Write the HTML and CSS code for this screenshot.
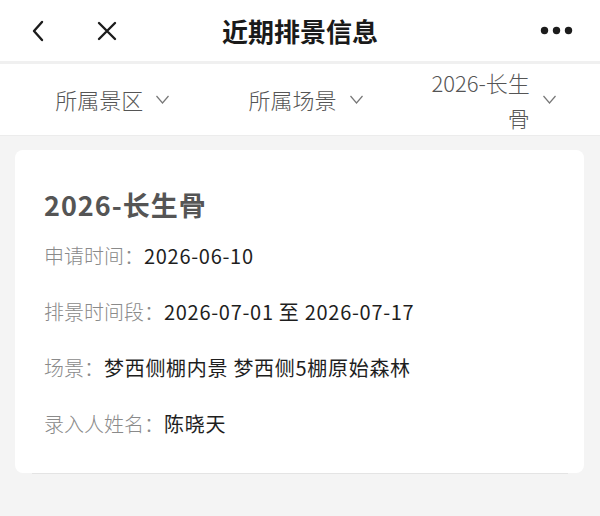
FILE: index.html
```html
<!DOCTYPE html>
<html lang="zh-CN">
<head>
    <meta charset="UTF-8">
    <meta name="viewport" content="width=device-width, initial-scale=1.0">
    <title>近期排景信息</title>
    <link rel="stylesheet" href="styles.css">
</head>
<body>
    <div class="topbar">
        <div class="topbar-left">
            <svg class="icon-back" width="14" height="22" viewBox="0 0 14 22">
                <path d="M11 2 L3 11 L11 20" fill="none" stroke="#1c1c1c" stroke-width="2.4" stroke-linecap="round" stroke-linejoin="round"/>
            </svg>
            <svg class="icon-close" width="20" height="20" viewBox="0 0 20 20">
                <path d="M2 2 L18 18 M18 2 L2 18" fill="none" stroke="#1c1c1c" stroke-width="2.4" stroke-linecap="round"/>
            </svg>
        </div>
        <div class="topbar-title">近期排景信息</div>
        <div class="topbar-right">
            <svg class="icon-more" width="33" height="9" viewBox="0 0 33 9">
                <circle cx="4.5" cy="4.5" r="3.7" fill="#1c1c1c"/>
                <circle cx="16.5" cy="4.5" r="3.7" fill="#1c1c1c"/>
                <circle cx="28.5" cy="4.5" r="3.7" fill="#1c1c1c"/>
            </svg>
        </div>
    </div>

    <div class="filters">
        <div class="filter">
            <span class="filter-text">所属景区</span>
            <svg class="chev" width="15" height="9" viewBox="0 0 15 9"><path d="M1.5 1 L7.5 8 L13.5 1" fill="none" stroke="#777" stroke-width="1.2"/></svg>
        </div>
        <div class="filter filter-mid">
            <span class="filter-text">所属场景</span>
            <svg class="chev" width="15" height="9" viewBox="0 0 15 9"><path d="M1.5 1 L7.5 8 L13.5 1" fill="none" stroke="#777" stroke-width="1.2"/></svg>
        </div>
        <div class="filter">
            <span class="filter-text filter-wrap">2026-长生骨</span>
            <svg class="chev" width="15" height="9" viewBox="0 0 15 9"><path d="M1.5 1 L7.5 8 L13.5 1" fill="none" stroke="#777" stroke-width="1.2"/></svg>
        </div>
    </div>

    <div class="card">
        <h2 class="card-title">2026-长生骨</h2>
        <div class="row"><span class="label">申请时间：</span><span class="value">2026-06-10</span></div>
        <div class="row"><span class="label">排景时间段：</span><span class="value">2026-07-01 至 2026-07-17</span></div>
        <div class="row"><span class="label">场景：</span><span class="value">梦西侧棚内景 梦西侧5棚原始森林</span></div>
        <div class="row"><span class="label">录入人姓名：</span><span class="value">陈晓天</span></div>
    </div>
    <div class="card-line"></div>
</body>
</html>
```

FILE: styles.css
```css
body {
    margin: 0;
    padding: 0;
    width: 600px;
    height: 516px;
    overflow: hidden;
    background-color: #f4f4f4;
    font-family: "Noto Sans CJK SC", "Noto Sans", sans-serif;
}

.topbar {
    display: grid;
    grid-template-columns: 1fr auto 1fr;
    align-items: center;
    height: 61px;
    background-color: #fff;
    border-bottom: 3px solid #f0f0f0;
}
.topbar-left {
    display: flex;
    align-items: center;
    gap: 52px;
    padding-left: 31px;
}
.topbar-title {
    font-size: 26px;
    font-weight: bold;
    color: #1a1a1a;
}
.topbar-right {
    display: flex;
    justify-content: flex-end;
    padding-right: 27px;
}
.icon-back {
    margin-top: 1px;
}

.filters {
    display: grid;
    grid-template-columns: 1fr 1fr 1fr;
    height: 71px;
    padding: 0 14px 0 18px;
    background-color: #fff;
    border-bottom: 1px solid #ececec;
}
.filter {
    display: flex;
    justify-content: center;
    align-items: center;
    gap: 12px;
}
.filter-mid {
    padding-left: 8px;
}
.filter-text {
    font-size: 22px;
    font-weight: 300;
    line-height: 35px;
    color: #555;
}
.filter-wrap {
    max-width: 104px;
    text-align: right;
}
.chev {
    flex-shrink: 0;
}

.card {
    margin: 14px 16px 0 15px;
    height: 323px;
    box-sizing: border-box;
    padding: 36px 29px 0 29px;
    background-color: #fff;
    border-radius: 8px;
    display: flex;
    flex-direction: column;
    gap: 28px;
}
.card-title {
    margin: 0 0 -9px 0;
    font-size: 27px;
    line-height: 37px;
    font-weight: bold;
    letter-spacing: 1px;
    color: #555;
}
.row {
    font-size: 20px;
    line-height: 28px;
    white-space: nowrap;
}
.label {
    font-weight: 300;
    color: #8a8a8a;
}
.value {
    letter-spacing: 0.7px;
    color: #1e1e1e;
}

.card-line {
    height: 1px;
    margin: 0 32px;
    background-color: #e4e4e4;
}
```
